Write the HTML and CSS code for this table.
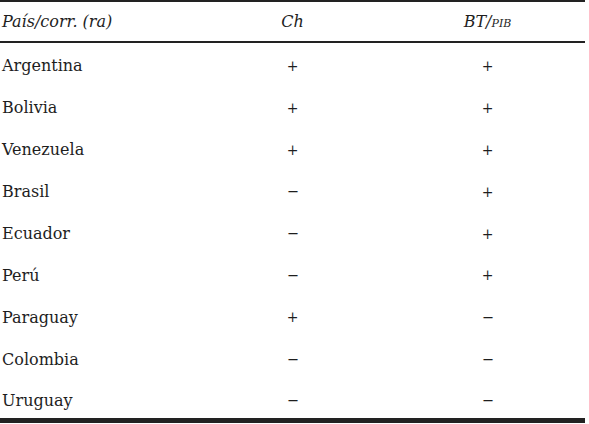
FILE: index.html
```html
<!DOCTYPE html>
<html lang="es">
<head>
<meta charset="utf-8">
<link rel="stylesheet" href="styles.css">
</head>
<body>
<table class="tabla">
  <thead>
    <tr>
      <th class="col-pais">País/corr. (ra)</th>
      <th class="col-val">Ch</th>
      <th class="col-val">BT/<span class="sc">pib</span></th>
    </tr>
  </thead>
  <tbody>
    <tr><td>Argentina</td><td class="v">+</td><td class="v">+</td></tr>
    <tr><td>Bolivia</td><td class="v">+</td><td class="v">+</td></tr>
    <tr><td>Venezuela</td><td class="v">+</td><td class="v">+</td></tr>
    <tr><td>Brasil</td><td class="v"><span class="m">–</span></td><td class="v">+</td></tr>
    <tr><td>Ecuador</td><td class="v"><span class="m">–</span></td><td class="v">+</td></tr>
    <tr><td>Perú</td><td class="v"><span class="m">–</span></td><td class="v">+</td></tr>
    <tr><td>Paraguay</td><td class="v">+</td><td class="v"><span class="m">–</span></td></tr>
    <tr><td>Colombia</td><td class="v"><span class="m">–</span></td><td class="v"><span class="m">–</span></td></tr>
    <tr class="ultima"><td>Uruguay</td><td class="v"><span class="m">–</span></td><td class="v"><span class="m">–</span></td></tr>
  </tbody>
</table>
</body>
</html>
```
FILE: styles.css
```css
html, body {
  margin: 0;
  padding: 0;
  background: #fff;
}
body {
  font-family: "DejaVu Serif", "Liberation Serif", serif;
  font-size: 16px;
  color: #1e1e1e;
}
.tabla {
  width: 585px;
  border-collapse: separate;
  border-spacing: 0;
  table-layout: fixed;
  border-top: 2px solid #222;
  border-bottom: 5px solid #222;
}
.tabla th {
  font-weight: normal;
  font-style: italic;
  height: 39px;
  padding: 0 2px;
  border-bottom: 2px solid #222;
  vertical-align: middle;
}
.col-pais { text-align: left; }
.col-val { text-align: center; }
.sc {
  font-variant: small-caps;
  font-size: 15px;
}
.tabla td {
  height: 37.9px;
  padding: 4px 2px 0;
  vertical-align: middle;
}
.tabla .ultima td {
  height: 36px;
  padding-top: 4px;
}
.tabla td.v {
  text-align: center;
  font-size: 14px;
}
.m {
  display: inline-block;
  font-size: 20px;
  line-height: 14px;
  transform: scaleX(1.1);
}
```
